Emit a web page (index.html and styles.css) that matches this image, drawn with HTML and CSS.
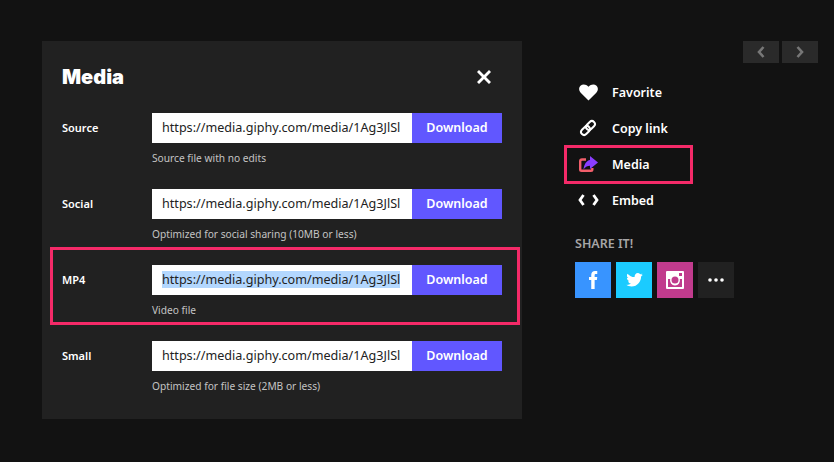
FILE: index.html
```html
<!DOCTYPE html>
<html lang="en">

<head>
    <meta charset="UTF-8">
    <title>Media</title>
    <link rel="stylesheet" href="styles.css">
</head>

<body>
    <div class="page">
        <div class="panel">
            <div class="panel-head">
                <h1>Media</h1>
                <svg class="close" width="16" height="16" viewBox="0 0 16 16">
                    <path d="M3 1l5 5 5-5 2 2-5 5 5 5-2 2-5-5-5 5-2-2 5-5-5-5z" fill="#fff" />
                </svg>
            </div>

            <div class="row">
                <div class="row-label">Source</div>
                <div class="row-body">
                    <div class="url-line">
                        <div class="url">https://media.giphy.com/media/1Ag3JlSl</div>
                        <button class="download">Download</button>
                    </div>
                    <div class="note">Source file with no edits</div>
                </div>
            </div>

            <div class="row">
                <div class="row-label">Social</div>
                <div class="row-body">
                    <div class="url-line">
                        <div class="url">https://media.giphy.com/media/1Ag3JlSl</div>
                        <button class="download">Download</button>
                    </div>
                    <div class="note">Optimized for social sharing (10MB or less)</div>
                </div>
            </div>

            <div class="row marked">
                <div class="row-label">MP4</div>
                <div class="row-body">
                    <div class="url-line">
                        <div class="url"><span class="selected">https://media.giphy.com/media/1Ag3JlSl</span></div>
                        <button class="download">Download</button>
                    </div>
                    <div class="note">Video file</div>
                </div>
            </div>

            <div class="row">
                <div class="row-label">Small</div>
                <div class="row-body">
                    <div class="url-line">
                        <div class="url">https://media.giphy.com/media/1Ag3JlSl</div>
                        <button class="download">Download</button>
                    </div>
                    <div class="note">Optimized for file size (2MB or less)</div>
                </div>
            </div>
        </div>

        <div class="side">
            <div class="pager">
                <div class="pager-btn">
                    <svg width="8" height="12" viewBox="0 0 8 12"><path d="M6.500 1L2 6l4.500 5" fill="none" stroke="#777" stroke-width="2.600" /></svg>
                </div>
                <div class="pager-btn">
                    <svg width="8" height="12" viewBox="0 0 8 12"><path d="M1.500 1L6 6l-4.500 5" fill="none" stroke="#777" stroke-width="2.600" /></svg>
                </div>
            </div>

            <div class="actions">
                <div class="action">
                    <span class="action-icon">
                        <svg width="19" height="17" viewBox="0 0 20 18">
                            <path d="M10 17.500L2 9.500C-.5 7-.4 3.600 1.500 1.800 3.800-.3 7.500 0 10 3c2.500-3 6.200-3.300 8.500-1.200 1.900 1.800 2 5.200-.5 7.700z" fill="#fff" />
                        </svg>
                    </span>
                    Favorite
                </div>
                <div class="action">
                    <span class="action-icon">
                        <svg width="18" height="18" viewBox="0 0 18 18">
                            <g transform="rotate(-45 9 9)" fill="none" stroke="#fff" stroke-width="2">
                                <rect x="0.500" y="6" width="10" height="6" rx="3" />
                                <rect x="7.500" y="6" width="10" height="6" rx="3" />
                            </g>
                        </svg>
                    </span>
                    Copy link
                </div>
                <div class="action marked-action">
                    <span class="action-icon">
                        <svg width="19" height="16" viewBox="0 0 19 16">
                            <path d="M7 3.500H3A1.800 1.800 0 0 0 1.200 5.300v8.200A1.300 1.300 0 0 0 2.500 14.800h9.500a1.300 1.300 0 0 0 1.300-1.300V12" fill="none" stroke="#f25f6b" stroke-width="2.400" />
                            <path d="M11 0l8 6.500-8 6.500V9.800C8.500 9.800 6.500 10.800 4.500 13.500 5 8.500 7.500 4.500 11 4z" fill="#8a3dff" />
                        </svg>
                    </span>
                    Media
                </div>
                <div class="action">
                    <span class="action-icon">
                        <svg width="21" height="12" viewBox="0 0 21 12">
                            <path d="M5.500 1L2 6l3.500 5M15.500 1L19 6l-3.500 5" fill="none" stroke="#fff" stroke-width="2.800" />
                        </svg>
                    </span>
                    Embed
                </div>
            </div>

            <div class="share-title">SHARE IT!</div>
            <div class="share">
                <div class="share-btn facebook">
                    <svg width="9" height="18" viewBox="0 0 12 24">
                        <path d="M3 24V12H0V8h3V5c0-3 2-5 5-5h3v4H9C8 4 7.500 4.500 7.500 5.500V8H11l-.5 4h-3v12z" fill="#fff" />
                    </svg>
                </div>
                <div class="share-btn twitter">
                    <svg width="17" height="14" viewBox="0 0 20 17">
                        <path d="M20 2c-.7.3-1.500.6-2.300.7.800-.5 1.500-1.300 1.800-2.200-.8.500-1.700.8-2.600 1C16.100.6 15.100 0 14 0c-2.300 0-4.100 2.300-3.900 5C6.800 4.800 3.800 3.200 1.400.8.300 2.600.8 5 2.500 6.200c-.6 0-1.200-.2-1.700-.5 0 2 1.400 3.700 3.200 4.100-.6.200-1.200.2-1.800.1.500 1.700 2 2.800 3.700 2.900C4.200 14 2.100 14.600 0 14.400 1.800 15.600 4 16.300 6.300 16.300c7.500 0 11.800-6.500 11.700-12.200.8-.6 1.500-1.300 2-2.100z" fill="#fff" />
                    </svg>
                </div>
                <div class="share-btn instagram">
                    <svg width="18" height="18" viewBox="0 0 18 18">
                        <path fill-rule="evenodd" d="M1 0h16a1 1 0 0 1 1 1v16a1 1 0 0 1-1 1H1a1 1 0 0 1-1-1V1a1 1 0 0 1 1-1zM2 8v8h14V8h-2.200a5 5 0 1 1-9.600 0zM9 5.500a3.500 3.500 0 1 0 0 7 3.500 3.500 0 0 0 0-7zM13 2v3h3V2z" fill="#fff" />
                    </svg>
                </div>
                <div class="share-btn more">
                    <svg width="16" height="4" viewBox="0 0 16 4">
                        <circle cx="2" cy="2" r="1.800" fill="#fff" />
                        <circle cx="8" cy="2" r="1.800" fill="#fff" />
                        <circle cx="14" cy="2" r="1.800" fill="#fff" />
                    </svg>
                </div>
            </div>
        </div>
    </div>
</body>

</html>
```

FILE: styles.css
```css
*,
*::after {
    box-sizing: border-box;
}

body {
    margin: 0;
    background-color: #121212;
    color: #fff;
    font-family: "Noto Sans", Arial, sans-serif;
    height: 462px;
    overflow: hidden;
}

.page {
    display: flex;
    padding: 41px 0 0 42px;
}

.panel {
    width: 480px;
    height: 378px;
    padding: 0 20px;
    background-color: #212121;
}

.panel-head {
    display: flex;
    justify-content: space-between;
    align-items: center;
    height: 72px;
}

.panel-head h1 {
    margin: 0;
    font-family: Inter, sans-serif;
    font-size: 20px;
    font-weight: 900;
}

.close {
    margin-right: 10px;
}

.row {
    position: relative;
    display: flex;
    height: 76px;
}

.row-label {
    width: 90px;
    font-size: 11px;
    font-weight: 600;
    line-height: 30px;
}

.url-line {
    display: flex;
    width: 350px;
    height: 30px;
}

.url {
    width: 260px;
    padding-left: 10px;
    background-color: #fff;
    color: #222;
    font-size: 12.6px;
    line-height: 30px;
    white-space: nowrap;
    overflow: hidden;
}

.selected {
    background-color: #b3d7fe;
}

.download {
    width: 90px;
    border: none;
    padding: 0 0 2px;
    background-color: #6157ff;
    color: #fff;
    font-family: "Noto Sans", sans-serif;
    font-size: 12.5px;
    font-weight: 600;
}

.note {
    margin-top: 6px;
    color: #c4c4c4;
    font-size: 10.2px;
    line-height: 18px;
}

/* red annotation boxes sit over the page */
.marked::after {
    content: "";
    position: absolute;
    left: -12px;
    top: -18px;
    width: 470px;
    height: 78px;
    border: 3px solid #f42a68;
}

.side {
    width: 243px;
    margin-left: 53px;
}

.pager {
    display: flex;
    justify-content: flex-end;
    gap: 3px;
}

.pager-btn {
    display: flex;
    justify-content: center;
    align-items: center;
    width: 36px;
    height: 22px;
    background-color: #2a2a2a;
}

.actions {
    margin-top: 11px;
}

.action {
    position: relative;
    display: flex;
    align-items: center;
    height: 36px;
    font-size: 12.5px;
    font-weight: 600;
}

.action-icon {
    display: flex;
    justify-content: center;
    width: 26px;
    margin-right: 11px;
}

.marked-action::after {
    content: "";
    position: absolute;
    left: -11px;
    top: -1px;
    width: 129px;
    height: 39px;
    border: 3px solid #f42a68;
}

.share-title {
    margin-top: 17px;
    color: #a6a6a6;
    font-size: 12.5px;
    font-weight: 600;
    line-height: 18px;
}

.share {
    display: flex;
    gap: 5px;
    margin-top: 9px;
}

.share-btn {
    display: flex;
    justify-content: center;
    align-items: center;
    width: 36px;
    height: 36px;
}

.facebook {
    background-color: #3894ff;
}

.twitter {
    background-color: #1bcbff;
}

.instagram {
    background-color: #c13b8d;
}

.more {
    background-color: #212121;
}
```
